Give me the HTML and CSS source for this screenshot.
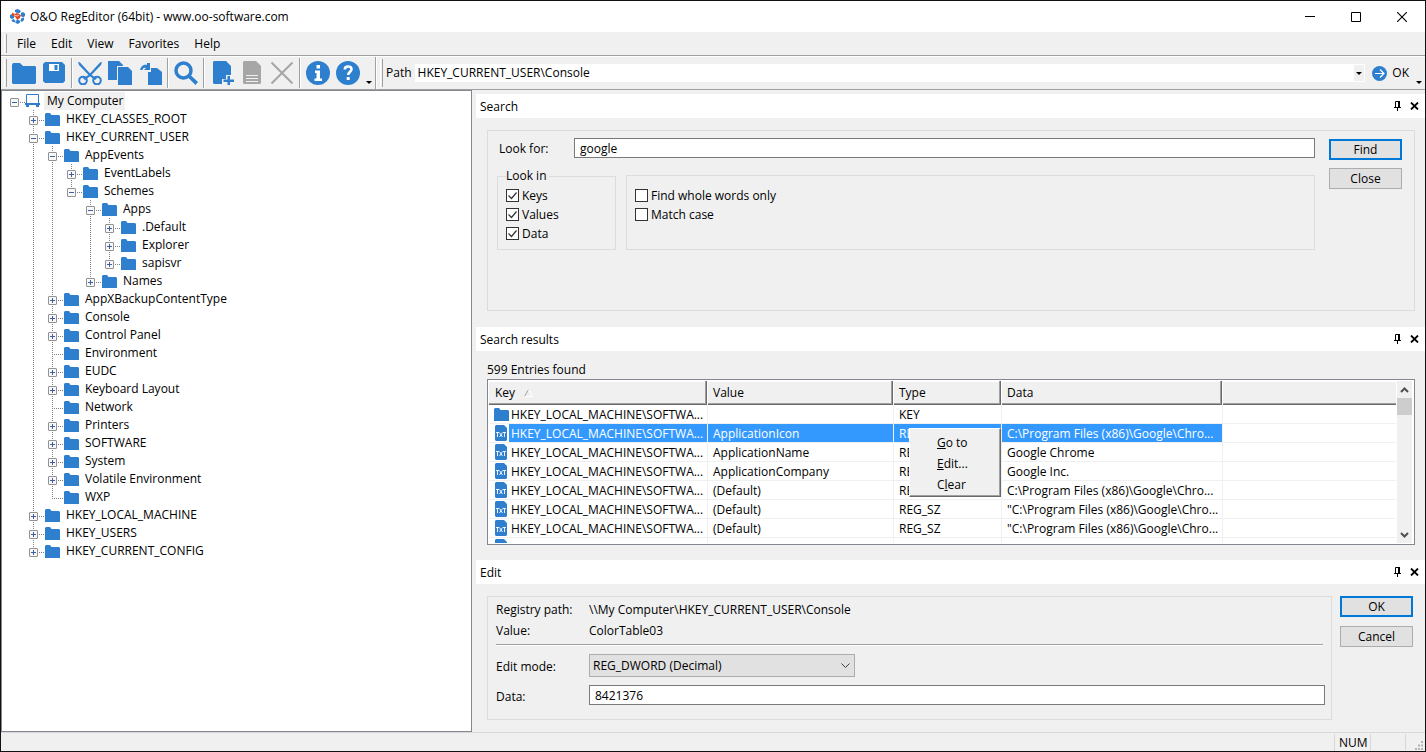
FILE: index.html
```html
<!DOCTYPE html>
<html lang="en">
<head>
    <meta charset="UTF-8">
    <meta name="viewport" content="width=device-width, initial-scale=1.0">
    <title>O&amp;O RegEditor (64bit) - www.oo-software.com</title>
    <link rel="stylesheet" href="styles.css">
</head>
<body>
    <!-- shared icons -->
    <svg class="sprite" aria-hidden="true">
        <symbol id="i-folder" viewBox="0 0 15 13"><path d="M0 1l1-1h4l1.500 2H14l1 1v10H0z" fill="#2e80cf"/></symbol>
        <symbol id="i-txt" viewBox="0 0 12 16">
            <path d="M1 0h8l3 3v12l-1 1H1l-1-1V1z" fill="#2e80cf"/>
            <path d="M1 7.5h3M2.5 7.5V12M4.5 7.5l3 4.5M7.5 7.5l-3 4.5M8 7.5h3M9.5 7.5V12" stroke="#fff" stroke-width=".9" fill="none"/>
        </symbol>
        <symbol id="i-pin" viewBox="0 0 7 10"><path d="M1.5 6V.5h4V6M0 6.5h7M3.5 6v4" stroke="#000" fill="none"/><path d="M4 0h2v6H4z"/></symbol>
        <symbol id="i-x" viewBox="0 0 9 8"><path d="M1 .5l7 7M8 .5l-7 7" stroke="#000" stroke-width="1.8"/></symbol>
    </svg>

    <div class="window">
        <header class="titlebar">
            <svg class="logo" viewBox="0 0 15 15">
                <g fill="#2e80cf">
                    <path d="M5 1l2.500-1 3 1.500v2L8 4.500 5 3z"/><path d="M0 6l2-1 2 1v3L2 10 0 9z"/>
                    <path d="M11 4l2-1 2 1.500V7l-2 1.500L11 7z"/><path d="M11 9.500l3-1v2.500l-2 2-1.500-1z"/>
                    <path d="M1.500 11l2-1 1.500 1.500v2L2 12.500z"/><path d="M5.500 12l2.500-1.500 2 1.500v1.500L8 15l-2.500-1z"/>
                </g>
                <path d="M2 3.500l3 1.500 2-1 4 2-1 3-3 2-1.500-3L2 6.500z" fill="#dd4a22"/>
                <path d="M4 6l3 1 2-1" stroke="#fff" stroke-width=".7" fill="none"/>
            </svg>
            <span class="title">O&amp;O RegEditor (64bit) - www.oo-software.com</span>
            <button class="win-button" aria-label="Minimize"><svg width="10" height="10" viewBox="0 0 10 10"><path d="M0 4.500h10" stroke="#000"/></svg></button>
            <button class="win-button" aria-label="Maximize"><svg width="10" height="10" viewBox="0 0 10 10"><path d="M.5.500h9v9h-9z" stroke="#000" fill="none"/></svg></button>
            <button class="win-button" aria-label="Close window"><svg width="10" height="10" viewBox="0 0 10 10"><path d="M0 0l10 10M10 0L0 10" stroke="#000" stroke-width="1.100"/></svg></button>
        </header>

        <nav class="menubar">
            <span class="grip"></span>
            <button>File</button>
            <button>Edit</button>
            <button>View</button>
            <button>Favorites</button>
            <button>Help</button>
        </nav>

        <div class="toolbar">
            <span class="grip"></span>
            <button class="tool" aria-label="Open"><svg viewBox="0 0 24 24"><path d="M0 4l1-2h7l3 3h12l1 1v16l-1 1H1l-1-1z"/></svg></button>
            <button class="tool" aria-label="Save"><svg viewBox="0 0 24 24"><path d="M3 1h17l3 3v16l-2 2H3l-2-2V3z"/><path d="M7 3h10v7H7z" fill="#fff"/><path d="M12.500 4h3v5h-3z"/></svg></button>
            <span class="sep"></span>
            <button class="tool" aria-label="Cut"><svg viewBox="0 0 24 24"><path d="M0 1l2 .5 11 12 6 4-2 1.500-6-4.500L1 4z"/><path d="M24 1l-2 .5-11 12-6 4 2 1.500 6-4.500L23 4z"/><g fill="none" stroke="#2e80cf" stroke-width="2"><circle cx="5" cy="19.500" r="3.800"/><circle cx="19" cy="19.500" r="3.800"/></g></svg></button>
            <button class="tool" aria-label="Copy"><svg viewBox="0 0 24 24"><path d="M0 0h11l4 4v1H9v14H0z"/><path d="M10 6h10l4 4v14H10z"/></svg></button>
            <button class="tool" aria-label="Paste"><svg viewBox="0 0 24 24"><path d="M13 7h6l5 4v13H10V11h3z"/><path d="M2 9c1-5 5-6 7-5V2h3v7H6l2-2C6 6.500 5 7 4.500 9z"/></svg></button>
            <span class="sep"></span>
            <button class="tool" aria-label="Search"><svg viewBox="0 0 24 24"><circle cx="9.500" cy="9.500" r="7.500" fill="none" stroke="#2e80cf" stroke-width="3.500"/><path d="M14 16.500l2.500-2.500 7.500 7-2.500 3z"/></svg></button>
            <span class="sep"></span>
            <button class="tool" aria-label="New"><svg viewBox="0 0 24 24"><path d="M4 0h12l5 5v9h-5v4h-4v5H4l-1-1V1z"/><path d="M17.500 15h2.500v3.500h4V21h-4v3h-2.500v-3h-4v-2.500h4z"/></svg></button>
            <button class="tool" aria-label="Properties" disabled><svg viewBox="0 0 24 24"><path d="M4 0h12l5 5v17l-1 1H4l-1-1V1z"/><path d="M6 14.500h12M6 17.500h12M6 20.500h12" stroke="#f0f0f0" stroke-width="1.200"/></svg></button>
            <button class="tool" aria-label="Delete" disabled><svg viewBox="0 0 24 24"><path d="M1.500 1.500l21 21M22.500 1.500l-21 21" stroke="#a6a6a6" stroke-width="2"/></svg></button>
            <span class="sep"></span>
            <button class="tool" aria-label="Info"><svg viewBox="0 0 24 24"><circle cx="12" cy="12" r="12"/><path d="M10.500 4h3.500v3.500h-3.500zM9 9.500h5v8h2V20H8.500v-2.500h2V12H9z" fill="#fff"/></svg></button>
            <button class="tool" aria-label="Help contents"><svg viewBox="0 0 24 24"><circle cx="12" cy="12" r="12"/><path d="M8.800 8.500c0-4 6.700-3.800 6.700-.2 0 2.700-3.300 2.500-3.300 5.700" fill="none" stroke="#fff" stroke-width="2.600"/><path d="M10.700 16h3v3h-3z" fill="#fff"/></svg></button>
            <span class="overflow"></span>
            <span class="bar-end"></span>
            <span class="grip"></span>
            <label for="path">Path</label>
            <div class="combo">
                <input id="path" type="text" value="HKEY_CURRENT_USER\Console">
                <button aria-label="Recent paths"><span class="caret"></span></button>
            </div>
            <button class="go">
                <svg width="15" height="15" viewBox="0 0 15 15"><circle cx="7.500" cy="7.500" r="7.500" fill="#2e80cf"/><path d="M3 7.500h9M8 3.500l4 4-4 4" stroke="#fff" stroke-width="1.200" fill="none"/></svg>
                OK
            </button>
            <span class="overflow"></span>
        </div>

        <div class="workspace">
            <aside class="tree">
                <div class="node root"><button class="toggle" aria-label="Collapse"></button><svg class="node-icon" viewBox="0 0 15 13"><path d="M1.500 .5h12v9h-12z" fill="none" stroke="#2e80cf"/><path d="M0 9h15v2h-1v2h-3v-2H4v2H1v-2H0z" fill="#2e80cf"/></svg><span class="name selected">My Computer</span></div>
                <ul>
                    <li><div class="node"><button class="toggle plus" aria-label="Expand"></button><svg class="node-icon"><use href="#i-folder"/></svg><span class="name">HKEY_CLASSES_ROOT</span></div></li>
                    <li>
                        <div class="node"><button class="toggle" aria-label="Collapse"></button><svg class="node-icon"><use href="#i-folder"/></svg><span class="name">HKEY_CURRENT_USER</span></div>
                        <ul>
                            <li>
                                <div class="node"><button class="toggle" aria-label="Collapse"></button><svg class="node-icon"><use href="#i-folder"/></svg><span class="name">AppEvents</span></div>
                                <ul>
                                    <li><div class="node"><button class="toggle plus" aria-label="Expand"></button><svg class="node-icon"><use href="#i-folder"/></svg><span class="name">EventLabels</span></div></li>
                                    <li>
                                        <div class="node"><button class="toggle" aria-label="Collapse"></button><svg class="node-icon"><use href="#i-folder"/></svg><span class="name">Schemes</span></div>
                                        <ul>
                                            <li>
                                                <div class="node"><button class="toggle" aria-label="Collapse"></button><svg class="node-icon"><use href="#i-folder"/></svg><span class="name">Apps</span></div>
                                                <ul>
                                                    <li><div class="node"><button class="toggle plus" aria-label="Expand"></button><svg class="node-icon"><use href="#i-folder"/></svg><span class="name">.Default</span></div></li>
                                                    <li><div class="node"><button class="toggle plus" aria-label="Expand"></button><svg class="node-icon"><use href="#i-folder"/></svg><span class="name">Explorer</span></div></li>
                                                    <li><div class="node"><button class="toggle plus" aria-label="Expand"></button><svg class="node-icon"><use href="#i-folder"/></svg><span class="name">sapisvr</span></div></li>
                                                </ul>
                                            </li>
                                            <li><div class="node"><button class="toggle plus" aria-label="Expand"></button><svg class="node-icon"><use href="#i-folder"/></svg><span class="name">Names</span></div></li>
                                        </ul>
                                    </li>
                                </ul>
                            </li>
                            <li><div class="node"><button class="toggle plus" aria-label="Expand"></button><svg class="node-icon"><use href="#i-folder"/></svg><span class="name">AppXBackupContentType</span></div></li>
                            <li><div class="node"><button class="toggle plus" aria-label="Expand"></button><svg class="node-icon"><use href="#i-folder"/></svg><span class="name">Console</span></div></li>
                            <li><div class="node"><button class="toggle plus" aria-label="Expand"></button><svg class="node-icon"><use href="#i-folder"/></svg><span class="name">Control Panel</span></div></li>
                            <li><div class="node leaf"><svg class="node-icon"><use href="#i-folder"/></svg><span class="name">Environment</span></div></li>
                            <li><div class="node"><button class="toggle plus" aria-label="Expand"></button><svg class="node-icon"><use href="#i-folder"/></svg><span class="name">EUDC</span></div></li>
                            <li><div class="node"><button class="toggle plus" aria-label="Expand"></button><svg class="node-icon"><use href="#i-folder"/></svg><span class="name">Keyboard Layout</span></div></li>
                            <li><div class="node leaf"><svg class="node-icon"><use href="#i-folder"/></svg><span class="name">Network</span></div></li>
                            <li><div class="node"><button class="toggle plus" aria-label="Expand"></button><svg class="node-icon"><use href="#i-folder"/></svg><span class="name">Printers</span></div></li>
                            <li><div class="node"><button class="toggle plus" aria-label="Expand"></button><svg class="node-icon"><use href="#i-folder"/></svg><span class="name">SOFTWARE</span></div></li>
                            <li><div class="node"><button class="toggle plus" aria-label="Expand"></button><svg class="node-icon"><use href="#i-folder"/></svg><span class="name">System</span></div></li>
                            <li><div class="node"><button class="toggle plus" aria-label="Expand"></button><svg class="node-icon"><use href="#i-folder"/></svg><span class="name">Volatile Environment</span></div></li>
                            <li><div class="node leaf"><svg class="node-icon"><use href="#i-folder"/></svg><span class="name">WXP</span></div></li>
                        </ul>
                    </li>
                    <li><div class="node"><button class="toggle plus" aria-label="Expand"></button><svg class="node-icon"><use href="#i-folder"/></svg><span class="name">HKEY_LOCAL_MACHINE</span></div></li>
                    <li><div class="node"><button class="toggle plus" aria-label="Expand"></button><svg class="node-icon"><use href="#i-folder"/></svg><span class="name">HKEY_USERS</span></div></li>
                    <li><div class="node"><button class="toggle plus" aria-label="Expand"></button><svg class="node-icon"><use href="#i-folder"/></svg><span class="name">HKEY_CURRENT_CONFIG</span></div></li>
                </ul>
            </aside>

            <main class="panels">
                <section class="panel">
                    <div class="panel-head">
                        <span>Search</span>
                        <button aria-label="Pin search"><svg width="7" height="10"><use href="#i-pin"/></svg></button>
                        <button aria-label="Close search"><svg width="9" height="8"><use href="#i-x"/></svg></button>
                    </div>
                    <div class="box search-box">
                        <div class="search-form">
                            <div class="look-for">
                                <label for="look">Look for:</label>
                                <input id="look" class="text" type="text" value="google">
                            </div>
                            <div class="options">
                                <fieldset class="look-in">
                                    <legend>Look in</legend>
                                    <label><input type="checkbox" checked>Keys</label>
                                    <label><input type="checkbox" checked>Values</label>
                                    <label><input type="checkbox" checked>Data</label>
                                </fieldset>
                                <fieldset class="match">
                                    <label><input type="checkbox">Find whole words only</label>
                                    <label><input type="checkbox">Match case</label>
                                </fieldset>
                            </div>
                        </div>
                        <div class="actions">
                            <button class="btn default">Find</button>
                            <button class="btn">Close</button>
                        </div>
                    </div>
                </section>

                <section class="panel results">
                    <div class="panel-head">
                        <span>Search results</span>
                        <button aria-label="Pin results"><svg width="7" height="10"><use href="#i-pin"/></svg></button>
                        <button aria-label="Close results"><svg width="9" height="8"><use href="#i-x"/></svg></button>
                    </div>
                    <p class="count">599 Entries found</p>
                    <div class="list">
                        <div class="list-view">
                            <table>
                                <colgroup>
                                    <col class="c-key"><col class="c-value"><col class="c-type"><col class="c-data"><col>
                                </colgroup>
                                <thead>
                                    <tr>
                                        <th>Key <svg class="sort" width="9" height="8" viewBox="0 0 9 8"><path d="M4.500 .5L.5 7.500" stroke="#a0a0a0"/><path d="M4.500 .5l4 7h-8" stroke="#fff" fill="none"/></svg></th>
                                        <th>Value</th>
                                        <th>Type</th>
                                        <th>Data</th>
                                        <th></th>
                                    </tr>
                                </thead>
                                <tbody>
                                    <tr>
                                        <td><div class="key"><svg class="node-icon"><use href="#i-folder"/></svg><span>HKEY_LOCAL_MACHINE\SOFTWA...</span></div></td>
                                        <td></td><td>KEY</td><td></td><td></td>
                                    </tr>
                                    <tr class="active">
                                        <td><div class="key"><svg class="txt"><use href="#i-txt"/></svg><span>HKEY_LOCAL_MACHINE\SOFTWA...</span></div></td>
                                        <td>ApplicationIcon</td><td>REG_SZ</td><td>C:\Program Files (x86)\Google\Chro...</td><td></td>
                                    </tr>
                                    <tr>
                                        <td><div class="key"><svg class="txt"><use href="#i-txt"/></svg><span>HKEY_LOCAL_MACHINE\SOFTWA...</span></div></td>
                                        <td>ApplicationName</td><td>REG_SZ</td><td>Google Chrome</td><td></td>
                                    </tr>
                                    <tr>
                                        <td><div class="key"><svg class="txt"><use href="#i-txt"/></svg><span>HKEY_LOCAL_MACHINE\SOFTWA...</span></div></td>
                                        <td>ApplicationCompany</td><td>REG_SZ</td><td>Google Inc.</td><td></td>
                                    </tr>
                                    <tr>
                                        <td><div class="key"><svg class="txt"><use href="#i-txt"/></svg><span>HKEY_LOCAL_MACHINE\SOFTWA...</span></div></td>
                                        <td>(Default)</td><td>REG_SZ</td><td>C:\Program Files (x86)\Google\Chro...</td><td></td>
                                    </tr>
                                    <tr>
                                        <td><div class="key"><svg class="txt"><use href="#i-txt"/></svg><span>HKEY_LOCAL_MACHINE\SOFTWA...</span></div></td>
                                        <td>(Default)</td><td>REG_SZ</td><td>"C:\Program Files (x86)\Google\Chro...</td><td></td>
                                    </tr>
                                    <tr>
                                        <td><div class="key"><svg class="txt"><use href="#i-txt"/></svg><span>HKEY_LOCAL_MACHINE\SOFTWA...</span></div></td>
                                        <td>(Default)</td><td>REG_SZ</td><td>"C:\Program Files (x86)\Google\Chro...</td><td></td>
                                    </tr>
                                    <tr>
                                        <td><div class="key"><svg class="txt"><use href="#i-txt"/></svg></div></td>
                                        <td></td><td></td><td></td><td></td>
                                    </tr>
                                </tbody>
                            </table>
                        </div>
                        <div class="scrollbar">
                            <button aria-label="Scroll up"><svg width="9" height="6" viewBox="0 0 9 6"><path d="M1 5l3.500-3.500L8 5" stroke="#505050" stroke-width="2" fill="none"/></svg></button>
                            <span class="thumb"></span>
                            <button aria-label="Scroll down"><svg width="9" height="6" viewBox="0 0 9 6"><path d="M1 1l3.500 3.500L8 1" stroke="#505050" stroke-width="2" fill="none"/></svg></button>
                        </div>
                        <div class="context-menu">
                            <button><u>G</u>o to</button>
                            <button><u>E</u>dit...</button>
                            <button>C<u>l</u>ear</button>
                        </div>
                    </div>
                </section>

                <section class="panel edit">
                    <div class="panel-head">
                        <span>Edit</span>
                        <button aria-label="Pin edit"><svg width="7" height="10"><use href="#i-pin"/></svg></button>
                        <button aria-label="Close edit"><svg width="9" height="8"><use href="#i-x"/></svg></button>
                    </div>
                    <div class="edit-body">
                        <div class="box edit-form">
                            <div class="info-row"><span>Registry path:</span><span>\\My Computer\HKEY_CURRENT_USER\Console</span></div>
                            <div class="info-row"><span>Value:</span><span>ColorTable03</span></div>
                            <hr>
                            <div class="field">
                                <label for="mode">Edit mode:</label>
                                <div class="select-wrap">
                                    <select id="mode"><option>REG_DWORD (Decimal)</option></select>
                                    <svg width="9" height="6" viewBox="0 0 9 6"><path d="M.5 .5l4 4 4-4" stroke="#404040" fill="none"/></svg>
                                </div>
                            </div>
                            <div class="field">
                                <label for="data">Data:</label>
                                <input id="data" class="text" type="text" value="8421376">
                            </div>
                        </div>
                        <div class="actions">
                            <button class="btn default">OK</button>
                            <button class="btn">Cancel</button>
                        </div>
                    </div>
                </section>
            </main>
        </div>

        <footer class="statusbar">
            <span class="num">NUM</span>
            <span class="cell"></span>
            <svg width="9" height="9" viewBox="0 0 9 9"><path d="M7 0h2v2H7zM4 3.500h2v2H4zM7 3.500h2v2H7zM1 7h2v2H1zM4 7h2v2H4zM7 7h2v2H7z" fill="#b4b4b4"/></svg>
        </footer>
    </div>
</body>
</html>
```
FILE: styles.css
```css
* {
    box-sizing: border-box;
}

body {
    margin: 0;
    background: #f0f0f0;
    color: #000;
}

body,
button,
input,
select {
    font-family: "Open Sans", "Noto Sans", sans-serif;
    font-size: 12px;
    line-height: 16px;
}

button {
    padding: 0;
    border: 0;
    background: none;
    color: #000;
}

svg {
    display: block;
    flex: none;
}

.sprite {
    position: absolute;
    width: 0;
    height: 0;
}

.window {
    display: flex;
    flex-direction: column;
    height: 100vh;
    border: 1px solid #111;
    overflow: hidden;
}

/* title bar */
.titlebar {
    display: flex;
    align-items: center;
    height: 31px;
    padding-left: 9px;
    background: #fff;
}

.logo {
    width: 15px;
    height: 15px;
}

.title {
    flex: 1;
    padding-left: 5px;
}

.win-button {
    display: flex;
    align-items: center;
    justify-content: center;
    width: 46px;
    height: 29px;
}

/* menu bar */
.menubar {
    display: flex;
    align-items: center;
    height: 24px;
    border-bottom: 1px solid #a0a0a0;
}

.menubar button {
    padding: 0 7px 0 8px;
}

.grip {
    width: 3px;
    height: 19px;
    margin: 0 2px 0 3px;
    border-right: 1px solid #a0a0a0;
    border-left: 1px solid #fff;
}

/* toolbar */
.toolbar {
    display: flex;
    align-items: center;
    height: 34px;
    border-top: 1px solid #fff;
    border-bottom: 1px solid #a0a0a0;
}

.toolbar .grip {
    height: 28px;
}

.tool {
    width: 30px;
    height: 30px;
    padding: 3px;
}

.tool svg {
    width: 24px;
    height: 24px;
    fill: #2e80cf;
}

.tool:disabled svg {
    fill: #a6a6a6;
}

.sep {
    width: 2px;
    height: 30px;
    margin: 0 2px;
    border-left: 1px solid #a0a0a0;
    border-right: 1px solid #fff;
}

.caret,
.overflow {
    width: 0;
    height: 0;
    border: 3px solid transparent;
    border-bottom: 0;
    border-top-color: #000;
}

.overflow {
    align-self: flex-end;
    margin: 0 3px 5px;
}

.bar-end {
    width: 2px;
    height: 32px;
    border-left: 1px solid #a0a0a0;
    border-right: 1px solid #fff;
}

.toolbar label {
    padding: 0 3px 0 1px;
}

.combo {
    display: flex;
    flex: 1;
    height: 18px;
    padding: 1px;
    background: #fff;
}

.combo input {
    flex: 1;
    min-width: 0;
    padding: 0 2px;
    border: 0;
    outline: 0;
    background: #fff;
}

.combo button {
    display: flex;
    align-items: center;
    justify-content: center;
    width: 10px;
    background: #f0f0f0;
}

.go {
    display: flex;
    align-items: center;
    gap: 5px;
    margin-left: 7px;
    padding-right: 4px;
}

/* tree */
.workspace {
    display: flex;
    flex: 1;
    min-height: 0;
}

.tree {
    flex: none;
    width: 471px;
    padding: 1px 0 0 8px;
    border: 1px solid #828790;
    background: #fff;
    overflow: hidden;
}

.tree ul {
    margin: 0;
    padding: 0 0 0 19px;
    list-style: none;
}

.tree li {
    background: repeating-linear-gradient(#808080 0 1px, transparent 1px 2px) 4px 0 / 1px 100% no-repeat;
}

.tree li:last-child {
    background-size: 1px 10px;
}

.node {
    display: flex;
    align-items: center;
    height: 18px;
    background: repeating-linear-gradient(90deg, #808080 0 1px, transparent 1px 2px) 10px 10px / 6px 1px no-repeat;
}

.leaf {
    padding-left: 16px;
    background-position: 4px 10px;
    background-size: 12px 1px;
}

.toggle {
    width: 9px;
    height: 9px;
    margin: 3px 7px 0 0;
    border: 1px solid #919191;
    border-radius: 1px;
    background: linear-gradient(#3f5fa5, #3f5fa5) 1px 3px / 5px 1px no-repeat, #f8f8f8;
}

.toggle.plus {
    background: linear-gradient(#3f5fa5, #3f5fa5) 1px 3px / 5px 1px no-repeat, linear-gradient(#3f5fa5, #3f5fa5) 3px 1px / 1px 5px no-repeat, #f8f8f8;
}

.node-icon {
    width: 15px;
    height: 13px;
}

.node .node-icon {
    margin-top: 1px;
}

.root .node-icon {
    margin: 0 1px 2px -1px;
}

.name {
    margin-left: 3px;
    padding: 0 2px 0 3px;
    line-height: 18px;
    white-space: nowrap;
}

.selected {
    background: #f0f0f0;
}

/* docked panels */
.panels {
    display: flex;
    flex: 1;
    flex-direction: column;
    min-width: 0;
    padding: 4px 0 0 4px;
}

.panel {
    display: flex;
    flex: 1;
    flex-direction: column;
    min-height: 0;
}

.panel-head {
    display: flex;
    flex: none;
    align-items: center;
    height: 24px;
    padding: 0 6px 0 4px;
    background: #fff;
}

.panel-head span {
    flex: 1;
    padding-top: 2px;
}

.panel-head button {
    margin-left: 9px;
}

.box {
    border: 1px solid #dcdcdc;
}

.text {
    flex: 1;
    height: 20px;
    min-width: 0;
    padding: 0 5px;
    border: 1px solid #7a7a7a;
    outline: 0;
    background: #fff;
}

.btn {
    width: 73px;
    height: 21px;
    border: 1px solid #adadad;
    background: #e1e1e1;
}

.btn.default {
    border: 2px solid #0078d7;
}

.actions {
    display: flex;
    flex-direction: column;
    gap: 8px;
}

/* search */
.search-box {
    display: flex;
    flex: 1;
    gap: 14px;
    margin: 12px 10px 16px 11px;
    padding: 7px 12px 0 9px;
}

.search-box .actions {
    padding-top: 1px;
}

.search-form {
    flex: 1;
}

.look-for {
    display: flex;
    align-items: center;
}

.look-for label {
    width: 77px;
    padding: 2px 0 0 2px;
}

.options {
    display: flex;
    align-items: flex-end;
    gap: 10px;
    margin-top: 10px;
}

fieldset {
    min-width: 0;
    margin: 0;
    padding: 0 8px;
    border: 1px solid #dcdcdc;
}

.look-in {
    width: 119px;
    height: 82px;
}

.look-in legend {
    padding: 0 2px 0 0;
}

.match {
    flex: 1;
    height: 75px;
    padding-top: 10px;
}

fieldset label {
    display: flex;
    align-items: center;
    gap: 3px;
    height: 19px;
}

.look-in legend + label {
    margin-top: 2px;
}

input[type="checkbox"] {
    appearance: none;
    width: 13px;
    height: 13px;
    margin: 0;
    border: 1px solid #333;
    background: #fff;
}

input[type="checkbox"]:checked {
    background: #fff url("data:image/svg+xml,%3Csvg xmlns='http://www.w3.org/2000/svg' viewBox='0 0 11 11'%3E%3Cpath d='M1.500 5.500l3 3 5-6' fill='none' stroke='%23333' stroke-width='1.200'/%3E%3C/svg%3E");
}

/* search results */
.count {
    margin: 11px 0 1px 11px;
}

.list {
    display: flex;
    flex: 1;
    position: relative;
    min-height: 0;
    margin: 0 10px 15px 11px;
    padding: 1px;
    border: 1px solid #828790;
    background: #fff;
}

.list-view {
    flex: 1;
    overflow: hidden;
}

table {
    width: 100%;
    border-collapse: separate;
    border-spacing: 0;
    table-layout: fixed;
}

.c-key {
    width: 219px;
}

.c-value {
    width: 186px;
}

.c-type {
    width: 108px;
}

.c-data {
    width: 221px;
}

th {
    height: 24px;
    padding: 0 6px;
    border-right: 1px solid #fff;
    background: #f0f0f0;
    box-shadow: inset -1px -1px #696969, inset -2px -2px #a0a0a0, inset 0 1px #fff;
    font-weight: normal;
    text-align: left;
}

th + th {
    padding-left: 5px;
}

th:last-child {
    border-right: 0;
    box-shadow: inset 0 -1px #696969, inset 0 -2px #a0a0a0, inset 0 1px #fff;
}

.sort {
    display: inline-block;
    margin-left: 6px;
}

td {
    height: 19px;
    padding: 2px 0 0 5px;
    border-right: 1px solid #f0f0f0;
    border-bottom: 1px solid #f0f0f0;
    white-space: nowrap;
    overflow: hidden;
}

td:first-child {
    padding-top: 0;
}

td:last-child {
    border-right: 0;
}

.key {
    display: flex;
    align-items: center;
    height: 18px;
}

.key span {
    flex: 1;
    padding: 2px 0 0 2px;
}

.txt {
    width: 12px;
    height: 16px;
    margin: 0 2px 0 1px;
}

.active td:nth-child(-n+4) {
    background: #3399ff;
    color: #fff;
    background-clip: padding-box;
}

.active td:first-child {
    background: none;
}

.active .key span {
    background: #3399ff;
}

.scrollbar {
    display: flex;
    flex-direction: column;
    width: 15px;
    margin: 0 1px 0 1px;
    background: #f0f0f0;
}

.scrollbar button {
    display: flex;
    align-items: center;
    justify-content: center;
    height: 17px;
}

.scrollbar button:last-child {
    margin-top: auto;
}

.thumb {
    height: 17px;
    background: #cdcdcd;
}

.context-menu {
    position: absolute;
    top: 48px;
    left: 421px;
    width: 92px;
    padding: 3px 2px 1px;
    border: 1px solid #fff;
    border-right-color: #696969;
    border-bottom-color: #696969;
    background: #f0f0f0;
    box-shadow: inset -1px -1px #a0a0a0;
}

.context-menu button {
    display: block;
    width: 100%;
    height: 21px;
    padding-left: 25px;
    text-align: left;
}

/* edit */
.edit {
    flex: none;
}

.edit-body {
    display: flex;
    gap: 8px;
    padding: 12px 12px 12px 11px;
}

.edit-form {
    flex: 1;
    padding: 2px 6px 14px 8px;
}

.edit-form hr {
    margin: 3px 2px 8px 0;
    border: 0;
    border-top: 1px solid #a0a0a0;
    border-bottom: 1px solid #fff;
}

.info-row {
    display: flex;
    align-items: center;
    height: 21px;
}

.info-row span:first-child,
.field label {
    width: 93px;
}

.field {
    display: flex;
    align-items: center;
}

.field label {
    padding-top: 3px;
}

.field + .field {
    margin-top: 8px;
}

.select-wrap {
    display: flex;
    position: relative;
}

.select-wrap select {
    appearance: none;
    width: 266px;
    height: 23px;
    padding: 0 20px 0 3px;
    border: 1px solid #adadad;
    border-radius: 0;
    background: #e1e1e1;
    color: #000;
}

.select-wrap svg {
    position: absolute;
    top: 9px;
    right: 5px;
    pointer-events: none;
}

.edit .actions {
    gap: 9px;
}

/* status bar */
.statusbar {
    display: flex;
    align-items: center;
    justify-content: flex-end;
    height: 19px;
    border-top: 1px solid #d7d7d7;
}

.num {
    width: 37px;
    padding: 1px 0 0 4px;
    border-left: 1px solid #d7d7d7;
    border-right: 1px solid #d7d7d7;
}

.cell {
    width: 35px;
    height: 16px;
    border-right: 1px solid #d7d7d7;
}

.statusbar svg {
    margin: 6px 2px 0 8px;
}
```
